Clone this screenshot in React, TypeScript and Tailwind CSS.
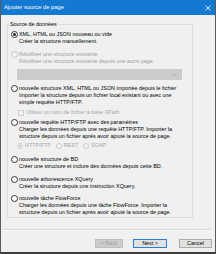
import React from "react";

type RadioProps = { checked?: boolean; disabled?: boolean };

function Radio({ checked, disabled }: RadioProps) {
  return (
    <span
      className={
        disabled
          ? "flex shrink-0 items-center justify-center w-[7px] h-[7px] rounded-full border border-[#c8c8c8] bg-[#f4f4f4]"
          : "flex shrink-0 items-center justify-center w-[7px] h-[7px] rounded-full border border-[#333333] bg-white"
      }
    >
      {checked ? (
        <span
          className={
            disabled
              ? "block w-[3px] h-[3px] rounded-full bg-[#b0b0b0]"
              : "block w-[3px] h-[3px] rounded-full bg-[#222222]"
          }
        />
      ) : null}
    </span>
  );
}

type ItemProps = {
  lines: string[];
  checked?: boolean;
  disabled?: boolean;
  className: string;
};

function Item({ lines, checked, disabled, className }: ItemProps) {
  return (
    <div className={"flex items-start " + className}>
      <Radio checked={checked} disabled={disabled} />
      <div
        className={
          disabled
            ? "ml-[1px] leading-[7px] text-[#a0a0a0] whitespace-nowrap"
            : "ml-[1px] leading-[7px] text-black whitespace-nowrap"
        }
      >
        {lines.map((l, i) => (
          <div key={i}>{l}</div>
        ))}
      </div>
    </div>
  );
}

function SmallRadio({ label, checked, className }: { label: string; checked?: boolean; className: string }) {
  return (
    <div className={"flex items-center " + className}>
      <span className="flex shrink-0 items-center justify-center w-[6px] h-[6px] rounded-full border border-[#cccccc] bg-[#f4f4f4]">
        {checked ? <span className="block w-[2px] h-[2px] rounded-full bg-[#b5b5b5]" /> : null}
      </span>
      <span className="ml-[2px] text-[#a5a5a5] leading-[7px]">{label}</span>
    </div>
  );
}

export default function App() {
  return (
    <div className="w-[216px] h-[254px] flex flex-col bg-[#f0f0f0] border-x border-[#5a5a5a] border-b-2 border-b-[#3c3c3c] font-['Liberation_Sans',Arial,sans-serif] text-[5.4px] overflow-hidden">
      {/* Title bar */}
      <div className="h-[15px] shrink-0 flex items-center justify-between bg-[#1479d0] pl-[3px] pr-[3px]">
        <span className="text-white text-[5.8px] leading-[7px]">Ajouter source de page</span>
        <svg width="6" height="6" viewBox="0 0 6 6" className="mr-[1px]">
          <path d="M0.5 0.5 L5.5 5.5 M5.5 0.5 L0.5 5.5" stroke="#ffffff" strokeWidth="0.8" fill="none" />
        </svg>
      </div>

      {/* Group box */}
      <fieldset className="mt-[6px] ml-[6px] w-[186px] border border-[#dcdcdc] pl-[1px] pb-[1px]">
        <legend className="px-[1px] leading-[7px] text-black">Source de données</legend>

        <div className="flex flex-col pl-[2px]">
          <Item
            className="mt-[3px]"
            checked
            lines={["XML, HTML ou JSON nouveau ou vide", "Créer la structure manuellement."]}
          />
          <Item
            className="mt-[6px]"
            disabled
            lines={["Réutiliser une structure existante", "Réutiliser une structure existante depuis une autre page."]}
          />
          <div className="mt-[4px] ml-[6px] w-[165px] h-[11px] bg-[#cccccc] border border-[#cccccc] flex items-center justify-end pr-[4px]">
            <svg width="5" height="3" viewBox="0 0 5 3">
              <path d="M0.5 0.5 L2.5 2.5 L4.5 0.5" stroke="#a0a0a0" strokeWidth="0.7" fill="none" />
            </svg>
          </div>
          <Item
            className="mt-[5px]"
            lines={[
              "nouvelle structure XML, HTML ou JSON importée depuis le fichier",
              "Importer la structure depuis un fichier local existant ou avec une",
              "simple requête HTTP/FTP.",
            ]}
          />
          <div className="mt-[3px] ml-[7px] flex items-center">
            <span className="block w-[6px] h-[6px] border border-[#cccccc] bg-[#f4f4f4]" />
            <span className="ml-[2px] leading-[7px] text-[#a5a5a5]">Utiliser un nom de fichier à base XPath</span>
          </div>
          <Item
            className="mt-[3px]"
            lines={[
              "nouvelle requête HTTP/FTP avec des paramètres",
              "Charger les données depuis une requête HTTP/FTP. Importer la",
              "structure depuis un fichier après avoir ajouté la source de page.",
            ]}
          />
          <div className="mt-[2px] ml-[6px] flex items-center h-[7px]">
            <SmallRadio className="" label="HTTP/FTP" checked />
            <SmallRadio className="ml-[5px]" label="REST" />
            <SmallRadio className="ml-[5px]" label="SOAP" />
          </div>
          <Item
            className="mt-[7px]"
            lines={["nouvelle structure de BD", "Créer une structure et inclure des données depuis cette BD."]}
          />
          <Item
            className="mt-[6px]"
            lines={["nouvelle arborescence XQuery", "Créer la structure depuis une instruction XQuery."]}
          />
          <Item
            className="mt-[5px]"
            lines={[
              "nouvelle tâche FlowForce",
              "Charger les données depuis une tâche FlowForce. Importer la",
              "structure depuis un fichier après avoir ajouté la source de page.",
            ]}
          />
        </div>
      </fieldset>

      {/* Separator */}
      <div className="mt-[11px] ml-[2px] mr-[3px] border-t border-[#d9d9d9] border-b border-b-[#fafafa]" />

      {/* Buttons */}
      <div className="mt-[8px] flex justify-end pr-[3px]">
        <div className="w-[28px] h-[9px] flex items-center justify-center bg-[#cccccc] border border-[#bfbfbf] text-[#a0a0a0] leading-[7px]">
          &lt; Back
        </div>
        <div className="ml-[10px] w-[34px] h-[9px] flex items-center justify-center bg-[#e1e1e1] border border-[#2a7fd4] text-black leading-[7px]">
          Next &gt;
        </div>
        <div className="ml-[12px] w-[33px] h-[9px] flex items-center justify-center bg-[#e1e1e1] border border-[#adadad] text-black leading-[7px]">
          Cancel
        </div>
      </div>
    </div>
  );
}
